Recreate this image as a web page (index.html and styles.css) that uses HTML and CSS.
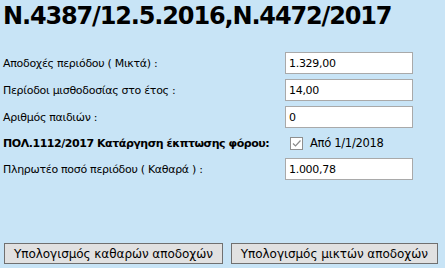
FILE: index.html
```html
<!DOCTYPE html>
<html lang="el">

<head>
    <meta charset="UTF-8">
    <title>Υπολογισμός αποδοχών</title>
    <link rel="stylesheet" href="styles.css">
</head>

<body>
    <div class="page">
        <h1>N.4387/12.5.2016,N.4472/2017</h1>

        <table class="form">
            <tr>
                <td class="label">Αποδοχές περιόδου ( Μικτά) :</td>
                <td><input type="text" class="field" value="1.329,00"></td>
            </tr>
            <tr>
                <td class="label">Περίοδοι μισθοδοσίας στο έτος :</td>
                <td><input type="text" class="field" value="14,00"></td>
            </tr>
            <tr>
                <td class="label">Αριθμός παιδιών :</td>
                <td><input type="text" class="field" value="0"></td>
            </tr>
            <tr>
                <td class="label strong">ΠΟΛ.1112/2017 Κατάργηση έκπτωσης φόρου:</td>
                <td>
                    <div class="check-row">
                        <span class="check">
                            <svg width="11" height="11" viewBox="0 0 11 11">
                                <path d="M2 5.5 L4.5 8 L9.5 2.5" fill="none" stroke="#8a8a8a" stroke-width="1.2"/>
                            </svg>
                        </span>
                        <span class="check-text">Από 1/1/2018</span>
                    </div>
                </td>
            </tr>
            <tr>
                <td class="label">Πληρωτέο ποσό περιόδου ( Καθαρά ) :</td>
                <td><input type="text" class="field" value="1.000,78"></td>
            </tr>
        </table>

        <div class="actions">
            <button class="btn">Υπολογισμός καθαρών αποδοχών</button>
            <button class="btn">Υπολογισμός μικτών αποδοχών</button>
        </div>
    </div>
</body>

</html>
```

FILE: styles.css
```css
body {
    margin: 0;
    padding: 0;
    background-color: #c8e4f6;
    font-family: 'DejaVu Sans', Verdana, sans-serif;
    color: #000;
}

.page {
    padding: 2px 3px;
}

h1 {
    margin: 0 0 22px;
    font-size: 24px;
    font-weight: bold;
    letter-spacing: -1.15px;
}

.form {
    border-collapse: collapse;
}

.form td {
    padding: 0 0 5px;
    vertical-align: middle;
}

.label {
    width: 282px;
    font-size: 11px;
    letter-spacing: -0.3px;
    white-space: nowrap;
}

.label.strong {
    font-weight: bold;
    font-size: 11px;
    letter-spacing: -0.45px;
}

.field {
    display: block;
    box-sizing: border-box;
    width: 128px;
    height: 22px;
    margin: 0;
    padding: 1px 3px;
    border: 1px solid #a9a9a9;
    background: #fff;
    font-family: 'DejaVu Sans', Verdana, sans-serif;
    font-size: 11px;
    letter-spacing: -0.3px;
}

.check-row {
    display: flex;
    align-items: center;
    gap: 7px;
    height: 20px;
    padding-left: 5px;
}

.check {
    display: flex;
    width: 11px;
    height: 11px;
    border: 1px solid #8f8f8f;
    background: #fff;
}

.check-text {
    font-size: 11.5px;
    letter-spacing: -0.3px;
}

.actions {
    display: flex;
    gap: 8px;
    margin-top: 58px;
    padding-left: 1px;
}

.btn {
    height: 21px;
    padding: 0 9px;
    border: 1px solid #707070;
    background: #e1e1e1;
    font-family: 'DejaVu Sans', Verdana, sans-serif;
    font-size: 12px;
    letter-spacing: -0.05px;
    color: #000;
}
```
